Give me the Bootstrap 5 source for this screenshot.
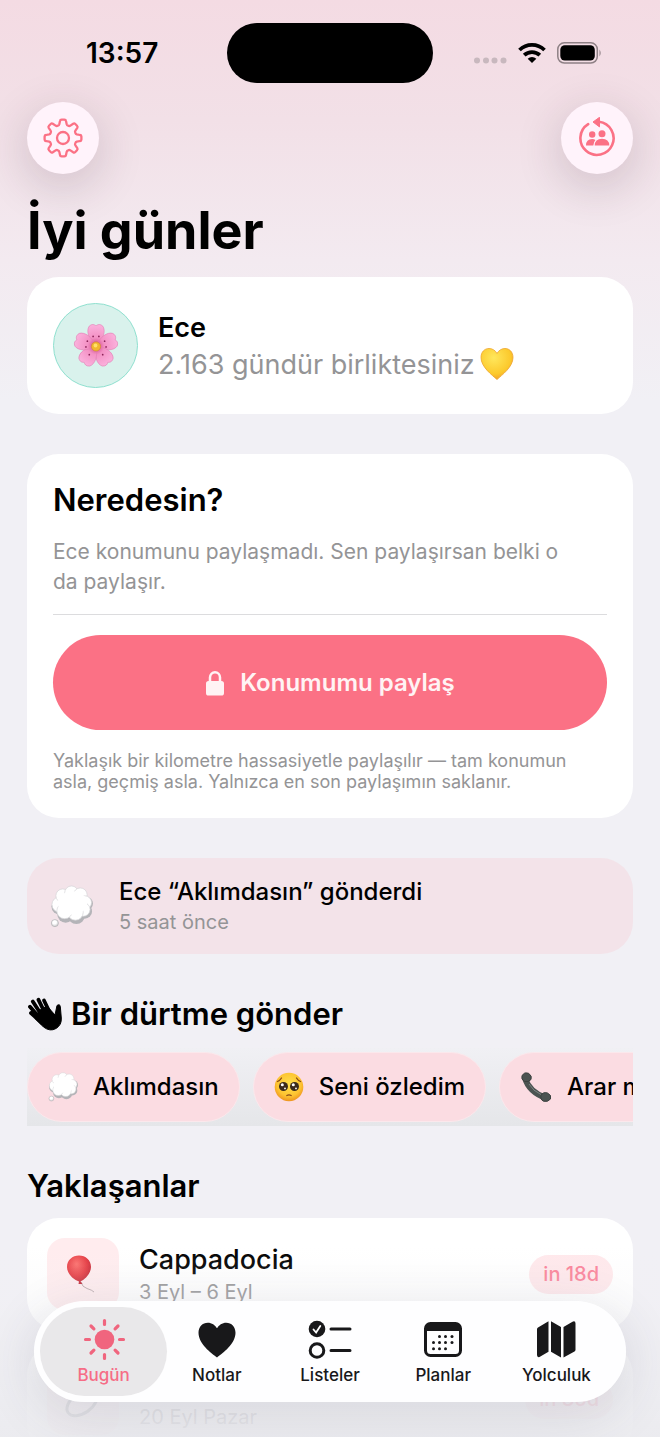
<!DOCTYPE html>
<html lang="tr">
<head>
<meta charset="utf-8">
<meta name="viewport" content="width=device-width, initial-scale=1">
<title>Bugün</title>
<link href="https://cdn.jsdelivr.net/npm/bootstrap@5.3.0/dist/css/bootstrap.min.css" rel="stylesheet">
<style>
  :root { --accent: #fb7185; --ink: #18181a; --muted: #949496; --page: #f1f0f5; }
  body { font-family: Inter, "Liberation Sans", sans-serif; color: #000; background: var(--page); }
  .app-screen {
    background: linear-gradient(#f4dbe3 0, #f2e0e7 120px, #f3eaf0 260px, var(--page) 400px);
  }
  .gutter { padding-left: 27px; padding-right: 27px; }
  .stack { gap: 40px; }

  .status-bar { padding-top: 23px; grid-template-columns: minmax(0, 1fr) 206px minmax(0, 1fr); }
  .clock { font-size: 28px; font-weight: 600; line-height: 32px; padding-left: 86px; }
  .status-icons { padding-right: 58px; gap: 11px; }
  .island { height: 60px; background: #000; border-radius: 30px; }

  .round-btn {
    width: 72px; height: 72px; padding: 0; border: 0; border-radius: 50%;
    background: #fff3fb; color: var(--accent);
    box-shadow: 0 12px 40px 6px rgba(70, 40, 60, .15);
  }
  .top-actions { padding-top: 19px; }
  .greeting { font-size: 52px; font-weight: 700; line-height: 64px; margin: 25px 0 14px; }

  .panel { background: #fff; border: 0; border-radius: 32px; padding: 26px; }
  .avatar { width: 85px; height: 85px; border-radius: 50%; background: #d9f2ec; border: 1px solid #8fe0cf; }
  .who { font-size: 27px; line-height: 37px; }
  .who-name { font-weight: 600; }
  .muted { color: var(--muted); }

  .section-title { font-size: 31px; font-weight: 600; line-height: 40px; margin: 0; }
  .desc { font-size: 21px; line-height: 30px; margin: 17px 0; }
  .rule { height: 1px; margin: 0; border: 0; background: #dcdcde; opacity: 1; }
  .share-btn {
    height: 95px; margin: 20px 0; border: 0; border-radius: 48px; gap: 15px;
    background: #fb7185; color: #fff3f4; font-size: 24px; font-weight: 600;
  }
  .share-btn:hover { background: #f4657b; color: #fff; }
  .fine { font-size: 18px; line-height: 21px; margin: 0; }

  .nudge-card { background: #f3e3e9; padding: 18px 23px; gap: 26px; }
  .line-lg { font-size: 24px; font-weight: 500; line-height: 32px; }
  .line-sm { font-size: 20px; line-height: 28px; }

  .chips { margin-top: 14px; padding: 4px 0; gap: 13px; overflow: hidden; background: linear-gradient(#f0f0f4, #e5e6e9); }
  .chip {
    height: 70px; padding: 0 20px; gap: 15px; border: 1px solid #fbe8ec; border-radius: 35px;
    background: #fbdce2; font-size: 24px; font-weight: 500; white-space: nowrap; flex: none;
  }
  .events { gap: 13px; margin-top: 12px; }
  .event { padding: 20px; gap: 20px; }
  .tile { width: 72px; height: 72px; border-radius: 18px; background: #ffecee; }
  .event-name { font-size: 27px; font-weight: 500; line-height: 36px; }
  .due { font-size: 20px; font-weight: 500; line-height: 39px; padding: 0 14px; border-radius: 20px; background: #ffe8eb; color: #fb8097; }

  .bottom-fade {
    height: 190px; pointer-events: none;
    background: linear-gradient(rgba(236,236,240,0), rgba(240,240,243,.22) 28%, rgba(237,237,241,.84) 75%, rgba(235,235,239,.92));
  }
  .tab-wrap { padding: 0 34px 35px; }
  .tab-bar {
    padding: 6px 13px; border-radius: 51px; background: rgba(254,254,255,.98);
    box-shadow: 0 12px 50px 4px rgba(60,60,80,.12); isolation: isolate;
  }
  .tab-link {
    flex: 1 1 0; height: 89px; padding: 10px 0 0; color: var(--ink); text-decoration: none;
    font-size: 17px; font-weight: 500; line-height: 24px; position: relative;
  }
  .tab-link.active { color: #f66d86; }
  .tab-link.active::before { content: ""; position: absolute; inset: 0 -7px; border-radius: 45px; background: #e9e8ea; z-index: -1; }
</style>
</head>
<body>
<svg class="position-absolute" width="0" height="0" aria-hidden="true">
  <defs>
    <radialGradient id="cloudFill" cx=".45" cy=".35" r=".65"><stop offset=".4" stop-color="#fff"/><stop offset="1" stop-color="#c8c8ca"/></radialGradient>
    <radialGradient id="faceFill" cx=".5" cy=".4" r=".6"><stop offset="0" stop-color="#ffe04a"/><stop offset=".7" stop-color="#fdc331"/><stop offset="1" stop-color="#ee9420"/></radialGradient>
    <radialGradient id="heartFill" cx=".4" cy=".3" r=".75"><stop offset="0" stop-color="#ffe75c"/><stop offset=".7" stop-color="#fcc92c"/><stop offset="1" stop-color="#f19a2a"/></radialGradient>
    <radialGradient id="balloonFill" cx=".4" cy=".3" r=".7"><stop offset="0" stop-color="#fb6f6c"/><stop offset=".6" stop-color="#e53a41"/><stop offset="1" stop-color="#bd2230"/></radialGradient>
    <radialGradient id="petalFill" gradientUnits="userSpaceOnUse" cx="24" cy="24" r="22"><stop offset="0" stop-color="#c93f83"/><stop offset=".4" stop-color="#f391c4"/><stop offset="1" stop-color="#fbb0dc"/></radialGradient>
    <symbol id="thought" viewBox="0 0 44 44">
      <g fill="#b4b4b8"><circle cx="10" cy="22" r="8.500"/><circle cx="16" cy="30" r="8.500"/><circle cx="27" cy="31.500" r="8.500"/><circle cx="35.500" cy="27" r="7.500"/><circle cx="37" cy="19" r="7"/></g>
      <g fill="#fff" stroke="#d4d4d7" stroke-width=".7"><circle cx="10" cy="20" r="8"/><circle cx="13" cy="11" r="7"/><circle cx="22" cy="8" r="7"/><circle cx="31" cy="10" r="7"/><circle cx="35.500" cy="18" r="7"/><circle cx="34" cy="25" r="7"/><circle cx="26" cy="28" r="8"/><circle cx="15" cy="26.500" r="8"/></g>
      <ellipse cx="23" cy="18.500" rx="15" ry="12" fill="#fff"/>
      <circle cx="5" cy="39" r="3.600" fill="url(#cloudFill)" stroke="#b0b0b3" stroke-width=".7"/>
    </symbol>
  </defs>
</svg>

<div class="app-screen vh-100 overflow-hidden position-relative">
  <header>
    <div class="status-bar d-grid align-items-center">
      <div class="clock">13:57</div>
      <div class="island"></div>
      <div class="status-icons d-flex align-items-center justify-content-end">
        <svg width="33" height="22" viewBox="0 0 33 22" fill="#c8b8be"><circle cx="3" cy="18.500" r="3"/><circle cx="12" cy="18.500" r="3"/><circle cx="20.500" cy="18.500" r="3"/><circle cx="29.500" cy="18.500" r="3"/></svg>
        <svg width="28" height="22" viewBox="0 0 28 22" fill="none" stroke="#000" stroke-width="3.800"><path d="M1.500 8a18 18 0 0 1 25 0"/><path d="M6.200 13.200a11.200 11.200 0 0 1 15.600 0"/><path d="M14 21l-4.300-4.300a6.200 6.200 0 0 1 8.600 0z" fill="#000" stroke="none"/></svg>
        <svg width="45" height="22" viewBox="0 0 45 22"><rect x=".8" y=".8" width="39.500" height="20.200" rx="6.500" fill="none" stroke="#8e8085" stroke-width="1.500"/><rect x="3.300" y="3.200" width="34.500" height="15.400" rx="4.500"/><path d="M42.500 7.500q2.400 3.500 0 7z" fill="#8e8085"/></svg>
      </div>
    </div>
    <div class="top-actions gutter d-flex justify-content-between">
      <button type="button" class="round-btn d-flex align-items-center justify-content-center" aria-label="Ayarlar">
        <svg width="40" height="40" viewBox="0 0 40 40" fill="none" stroke="currentColor" stroke-width="2.300" stroke-linejoin="round"><circle cx="20" cy="20" r="6"/><path d="M17 3Q17.200 1.600 18.600 1.600H21.400Q22.800 1.600 23 3L23.700 6.200Q24 7.300 25.200 7.700Q26.400 8.300 27.400 7.600L30.200 5.700Q31.300 5 32.300 6L34 7.700Q35 8.700 34.300 9.800L32.400 12.600Q31.700 13.600 32.300 14.800Q32.700 16 33.800 16.300L37 17Q38.400 17.200 38.400 18.600V21.400Q38.400 22.800 37 23L33.800 23.700Q32.700 24 32.300 25.200Q31.700 26.400 32.400 27.400L34.300 30.200Q35 31.300 34 32.300L32.300 34Q31.300 35 30.200 34.300L27.400 32.400Q26.400 31.700 25.200 32.300Q24 32.700 23.700 33.800L23 37Q22.800 38.400 21.400 38.400H18.600Q17.200 38.400 17 37L16.300 33.800Q16 32.700 14.800 32.300Q13.600 31.700 12.600 32.400L9.800 34.300Q8.700 35 7.700 34L6 32.300Q5 31.300 5.700 30.200L7.600 27.400Q8.300 26.400 7.700 25.200Q7.300 24 6.200 23.700L3 23Q1.600 22.800 1.600 21.400V18.600Q1.600 17.200 3 17L6.200 16.300Q7.300 16 7.700 14.800Q8.300 13.600 7.600 12.600L5.700 9.800Q5 8.700 6 7.700L7.700 6Q8.700 5 9.800 5.700L12.600 7.600Q13.600 8.300 14.800 7.700Q16 7.300 16.300 6.200Z"/></svg>
      </button>
      <button type="button" class="round-btn d-flex align-items-center justify-content-center" aria-label="Eş değiştir">
        <svg width="40" height="42" viewBox="0 0 40 42" fill="currentColor"><path d="M11.200 7.200A16.600 16.600 0 1 0 22 4.800" fill="none" stroke="currentColor" stroke-width="2.600" stroke-linecap="round"/><path d="M16 5 22.500.3v9.600z" stroke="currentColor" stroke-linejoin="round"/><circle cx="15.200" cy="17.500" r="3.200"/><circle cx="25" cy="16.700" r="3.500"/><path d="M9 28.500q0-6.500 6.200-6.500 2 0 3.200.9Q16.500 25 16.300 28.500zM17.700 28.500q.2-6.800 7.300-6.800T32.300 28.500z"/></svg>
      </button>
    </div>
  </header>

  <main class="gutter">
    <h1 class="greeting">İyi günler</h1>
    <div class="stack d-flex flex-column">
      <section class="panel card flex-row align-items-center">
        <div class="avatar d-flex align-items-center justify-content-center">
          <svg width="46" height="46" viewBox="0 0 48 48"><g fill="url(#petalFill)" stroke="#e27bb3" stroke-width=".6"><path id="petal" d="M24 24C16 17 13.500 8 17 3.200 20 .6 22.500 1.600 24 3 25.500 1.600 28 .6 31 3.200 34.500 8 32 17 24 24z"/><use href="#petal" transform="rotate(72 24 24)"/><use href="#petal" transform="rotate(144 24 24)"/><use href="#petal" transform="rotate(216 24 24)"/><use href="#petal" transform="rotate(288 24 24)"/></g><g fill="#8c2459"><circle cx="21" cy="14" r=".9"/><circle cx="27" cy="14" r=".9"/><circle cx="33" cy="19" r=".9"/><circle cx="34.500" cy="25" r=".9"/><circle cx="31" cy="33" r=".9"/><circle cx="17" cy="33" r=".9"/><circle cx="13.500" cy="25" r=".9"/><circle cx="15" cy="19" r=".9"/></g><circle cx="24" cy="24.500" r="4.800" fill="#f2b731" stroke="#c9862a" stroke-width=".6"/><circle cx="23.500" cy="23.500" r="2" fill="#ffe06a"/></svg>
        </div>
        <div class="who ms-3 ps-1">
          <div class="who-name">Ece</div>
          <div class="muted d-flex align-items-center">2.163 gündür birliktesiniz
            <svg class="ms-1" width="36" height="34" viewBox="0 0 36 34"><path d="M18 32.500C13 28 2 20 2 10.500 2 5 5.500 1.500 10 1.500c3.500 0 6.500 2 8 5 1.500-3 4.500-5 8-5 4.500 0 8 3.500 8 9C34 20 23 28 18 32.500z" fill="url(#heartFill)" stroke="#eda32c" stroke-width=".8"/></svg>
          </div>
        </div>
      </section>

      <section class="panel card">
        <h2 class="section-title">Neredesin?</h2>
        <p class="desc muted">Ece konumunu paylaşmadı. Sen paylaşırsan belki o<br>da paylaşır.</p>
        <hr class="rule">
        <button type="button" class="share-btn btn w-100 d-flex align-items-center justify-content-center">
          <svg width="20" height="26" viewBox="0 0 20 26" fill="currentColor"><rect x="1" y="11" width="18" height="14.500" rx="2.600"/><path d="M5 12V7.500a5 5.300 0 0 1 10 0V12" fill="none" stroke="currentColor" stroke-width="2.500"/></svg>
          Konumumu paylaş
        </button>
        <p class="fine muted">Yaklaşık bir kilometre hassasiyetle paylaşılır — tam konumun asla, geçmiş asla. Yalnızca en son paylaşımın saklanır.</p>
      </section>

      <section class="panel nudge-card card flex-row align-items-center">
        <svg width="43" height="43"><use href="#thought"/></svg>
        <div>
          <div class="line-lg">Ece “Aklımdasın” gönderdi</div>
          <div class="line-sm muted">5 saat önce</div>
        </div>
      </section>

      <section>
        <h2 class="section-title d-flex align-items-center">
          <svg class="me-2" width="36" height="36" viewBox="0 0 36 36" fill="none" stroke="#000" stroke-linecap="round"><path d="M13 14 L20 10 28 19 30 9.500Q32.800 7.500 33.300 10.500L34.300 22Q34.800 29 29 32.500T16.500 31L8.500 23z" fill="#000" stroke-width="1"/><path d="M20 21 11.500 3.800M16.500 22 5.800 5.500M14.500 24 3 10.700M15 27 4 17" stroke-width="3.800"/><path d="M23 17 17 4.500" stroke-width="3.800"/></svg>
          Bir dürtme gönder
        </h2>
        <div class="chips d-flex">
          <button type="button" class="chip d-flex align-items-center"><svg width="30" height="30"><use href="#thought"/></svg>Aklımdasın</button>
          <button type="button" class="chip d-flex align-items-center">
            <svg width="30" height="30" viewBox="0 0 30 30"><circle cx="15" cy="15" r="14.300" fill="url(#faceFill)"/><g fill="#3a2a1c"><circle cx="9.500" cy="14.500" r="4.500"/><circle cx="20.500" cy="14.500" r="4.500"/></g><g fill="#fff"><circle cx="8.300" cy="12.800" r="1.500"/><circle cx="19.300" cy="12.800" r="1.500"/><circle cx="11" cy="16.400" r=".9"/><circle cx="22" cy="16.400" r=".9"/></g><path d="M3.500 9.500Q6 8.500 7.500 6M26.500 9.500Q24 8.500 22.500 6M12.800 23.500q2.200-1.200 4.400 0" fill="none" stroke="#8a4b16" stroke-width="1.300" stroke-linecap="round"/></svg>Seni özledim</button>
          <button type="button" class="chip d-flex align-items-center">
            <svg width="32" height="32" viewBox="0 0 32 32"><path d="M5 7Q9 21 26 27" fill="none" stroke="#4b5351" stroke-width="6"/><path d="M2 4.500Q4.500.5 8.500 2.200 12.500 5 11 8.500 8.500 11.500 4.500 10.500.8 8.500 2 4.500zM21 24.500Q23 20.500 27.500 22 32 24 30.500 28 27.500 31.500 23.500 30.200 20 28.500 21 24.500z" fill="#4b5351" stroke="#3b4240"/><path d="M9 13Q13 20 21 23.500" fill="none" stroke="#7b8482" stroke-width="1"/></svg>Arar mısın?</button>
        </div>
      </section>

      <section>
        <h2 class="section-title">Yaklaşanlar</h2>
        <div class="events d-flex flex-column">
          <article class="panel event card flex-row align-items-center">
            <div class="tile d-flex align-items-center justify-content-center">
              <svg width="36" height="40" viewBox="0 0 36 40"><path d="M16 28Q17 33 22 34.500T29 38" fill="none" stroke="#b9a9ac" stroke-width="1"/><path d="M2 13C2 6 7.500 1.500 14 1.500S26 6 26 13 19 26 15.500 27.500L17.500 30h-4l.5-2.500C9 26 2 20 2 13z" fill="url(#balloonFill)"/></svg>
            </div>
            <div class="flex-grow-1">
              <div class="event-name">Cappadocia</div>
              <div class="line-sm muted">3 Eyl – 6 Eyl</div>
            </div>
            <span class="due">in 18d</span>
          </article>
          <article class="panel event card flex-row align-items-center">
            <div class="tile d-flex align-items-center justify-content-center">
              <svg width="44" height="44" viewBox="0 0 44 44"><ellipse cx="21" cy="26" rx="17" ry="10" transform="rotate(-35 21 26)" fill="none" stroke="#8b8b90" stroke-width="3"/></svg>
            </div>
            <div class="flex-grow-1">
              <div class="event-name">&nbsp;</div>
              <div class="line-sm muted">20 Eyl Pazar</div>
            </div>
            <span class="due">in 35d</span>
          </article>
        </div>
      </section>
    </div>
  </main>

  <div class="bottom-fade position-absolute bottom-0 start-0 end-0"></div>
  <div class="tab-wrap position-absolute bottom-0 start-0 end-0">
    <nav class="tab-bar d-flex">
      <a class="tab-link active d-flex flex-column align-items-center" href="#" aria-current="page">
        <svg width="44" height="46" viewBox="0 0 44 46"><circle cx="22.500" cy="22.500" r="9.800" fill="#f0657e"/><path d="M22.500 3.500v4M22.500 37.500v4M3.500 22.500h4M37.500 22.500h4M9 9l2.900 2.900M33.100 33.100l2.900 2.900M9 36l2.900-2.900M33.100 11.900l2.900-2.900" stroke="#f0657e" stroke-width="3.200" stroke-linecap="round"/></svg>Bugün</a>
      <a class="tab-link d-flex flex-column align-items-center" href="#">
        <svg width="44" height="46" viewBox="0 0 44 46" fill="currentColor"><path d="M22 40.500C16 36 3.500 27 3.500 15.800 3.500 9.800 7.500 5.700 12.800 5.700c4 0 7.300 2.300 9.200 5.600 1.900-3.300 5.200-5.600 9.200-5.600 5.300 0 9.300 4.100 9.300 10.100C40.500 27 28 36 22 40.500z"/></svg>Notlar</a>
      <a class="tab-link d-flex flex-column align-items-center" href="#">
        <svg width="44" height="46" viewBox="0 0 44 46" fill="none" stroke="currentColor" stroke-width="3" stroke-linecap="round"><circle cx="9" cy="12" r="8.300" fill="currentColor" stroke="none"/><circle cx="9" cy="33.500" r="6.800"/><path d="M23 12h19M23 33.500h19"/><path d="M5.500 12.500l2.600 3 4.200-6.500" stroke="#fff" stroke-width="1.800"/></svg>Listeler</a>
      <a class="tab-link d-flex flex-column align-items-center" href="#">
        <svg width="44" height="46" viewBox="0 0 44 46" fill="currentColor"><rect x="4.500" y="6.500" width="35" height="32" rx="5" fill="none" stroke="currentColor" stroke-width="3"/><path d="M4 14v-3q0-5 5-5h26q5 0 5 5v3z"/><g><circle cx="18.500" cy="19.500" r="1.500"/><circle cx="24.500" cy="19.500" r="1.500"/><circle cx="31" cy="19.500" r="1.500"/><circle cx="12.500" cy="25.500" r="1.500"/><circle cx="18.500" cy="25.500" r="1.500"/><circle cx="24.500" cy="25.500" r="1.500"/><circle cx="31" cy="25.500" r="1.500"/><circle cx="12.500" cy="31.700" r="1.500"/><circle cx="18.500" cy="31.700" r="1.500"/><circle cx="24.500" cy="31.700" r="1.500"/></g></svg>Planlar</a>
      <a class="tab-link d-flex flex-column align-items-center" href="#">
        <svg width="44" height="46" viewBox="0 0 44 46" fill="currentColor"><path d="M4 10.500 14.500 4.300v30.500L5.500 40Q3 40.700 3 38V12.200Q3 11.200 4 10.500zM17 4.300 27 10v30.500L17 34.800zM29.500 10l9-5.300Q41.500 3.500 41.500 6.500v26.300Q41.500 34 40.500 34.500l-11 6z"/></svg>Yolculuk</a>
    </nav>
  </div>
</div>
<script src="https://cdn.jsdelivr.net/npm/bootstrap@5.3.0/dist/js/bootstrap.bundle.min.js"></script>
</body>
</html>
